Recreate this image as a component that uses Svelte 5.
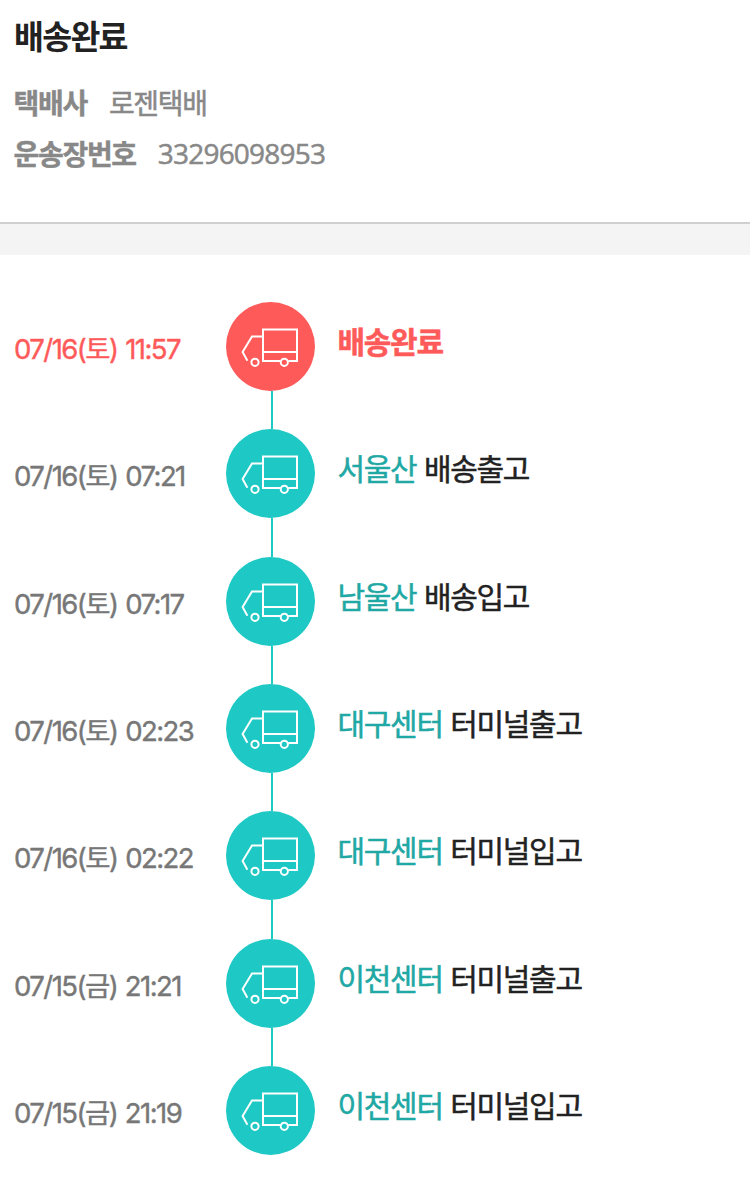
<script>
  const steps = [
    { date: "07/16", day: "토", time: "11:57", place: "", status: "배송완료", done: true },
    { date: "07/16", day: "토", time: "07:21", place: "서울산", status: "배송출고" },
    { date: "07/16", day: "토", time: "07:17", place: "남울산", status: "배송입고" },
    { date: "07/16", day: "토", time: "02:23", place: "대구센터", status: "터미널출고" },
    { date: "07/16", day: "토", time: "02:22", place: "대구센터", status: "터미널입고" },
    { date: "07/15", day: "금", time: "21:21", place: "이천센터", status: "터미널출고" },
    { date: "07/15", day: "금", time: "21:19", place: "이천센터", status: "터미널입고" },
  ];
</script>

<header>
  <h1>배송완료</h1>
  <dl>
    <div class="info">
      <dt>택배사</dt>
      <dd>로젠택배</dd>
    </div>
    <div class="info">
      <dt>운송장번호</dt>
      <dd class="number">33296098953</dd>
    </div>
  </dl>
</header>

<div class="divider"></div>

<ol>
  {#each steps as step}
    <li class:done={step.done}>
      <div class="time">{step.date}({step.day}) {step.time}</div>
      <div class="track">
        <svg class="badge" viewBox="0 0 89 89" fill="none" stroke="#fff" stroke-width="2">
          <circle class="disc" cx="44.5" cy="44.5" r="44.5" stroke="none" />
          <path d="M54.3 59H37V27.5H71V59H62.3M37 50H71M37 34.5H26L16.6 50L21.4 58.7" />
          <circle cx="29" cy="60.3" r="3.6" />
          <circle cx="58.3" cy="60.3" r="3.6" />
        </svg>
        <div class="line"></div>
      </div>
      <p>{#if step.place}<span class="place">{step.place}</span>{/if}<span>{step.status}</span></p>
    </li>
  {/each}
</ol>

<style>
  :global(body) {
    margin: 0;
    background: #fff;
    font-family: "Noto Sans CJK KR", sans-serif;
  }

  /* --- HEADER --- */
  header {
    box-sizing: border-box;
    height: 222px;
    padding: 13px 14px 0 14px;
  }

  h1 {
    margin: 0;
    font-size: 32.5px;
    line-height: 44px;
    font-weight: 700;
    letter-spacing: -1.7px;
    color: #222;
  }

  dl {
    margin: 20px 0 0;
  }

  .info {
    display: flex;
    gap: 22px;
    height: 51px;
    font-size: 28px;
    line-height: 51px;
    letter-spacing: -1.3px;
    color: #888;
  }

  dt {
    margin-left: -0.5px;
    font-weight: 700;
    -webkit-text-stroke: 0.4px currentColor;
  }

  dd {
    margin: 0;
    -webkit-text-stroke: 0.5px currentColor;
  }

  .number {
    font-family: "Open Sans", sans-serif;
    letter-spacing: -0.8px;
  }

  .divider {
    box-sizing: border-box;
    height: 33px;
    border-top: 2px solid #d0d0d0;
    background: #f4f4f4;
  }

  /* --- TIMELINE --- */
  ol {
    margin: 0;
    padding: 47px 0 0;
    list-style: none;
  }

  li {
    display: grid;
    grid-template-columns: 226px 89px 1fr;
    height: 127.33px;
  }

  li:last-child {
    height: 89px;
  }

  .time {
    padding: 27px 0 0 14px;
    font-family: Inter, "Noto Sans CJK KR", sans-serif;
    font-size: 27.5px;
    line-height: 40px;
    letter-spacing: -1.55px;
    word-spacing: 1.5px;
    color: #777;
    white-space: nowrap;
    -webkit-text-stroke: 0.4px currentColor;
  }

  .done .time {
    color: #ff5a5a;
  }

  .track {
    display: flex;
    flex-direction: column;
    align-items: center;
  }

  .badge {
    display: block;
    flex: none;
    width: 89px;
    height: 89px;
  }

  .disc {
    fill: #1ec8c5;
  }

  .done .disc {
    fill: #ff5a5a;
  }

  .line {
    flex: 1;
    width: 2px;
    margin-left: 2px;
    background: #1ec8c5;
  }

  p {
    margin: 0;
    padding: 17px 0 0 22.5px;
    font-size: 30px;
    line-height: 42px;
    letter-spacing: -1.3px;
    color: #222;
    white-space: nowrap;
    -webkit-text-stroke: 0.5px currentColor;
  }

  .place {
    margin-right: 7.5px;
    color: #1fa8a4;
  }

  .done p {
    font-weight: 700;
    color: #ff5a5a;
  }
</style>
